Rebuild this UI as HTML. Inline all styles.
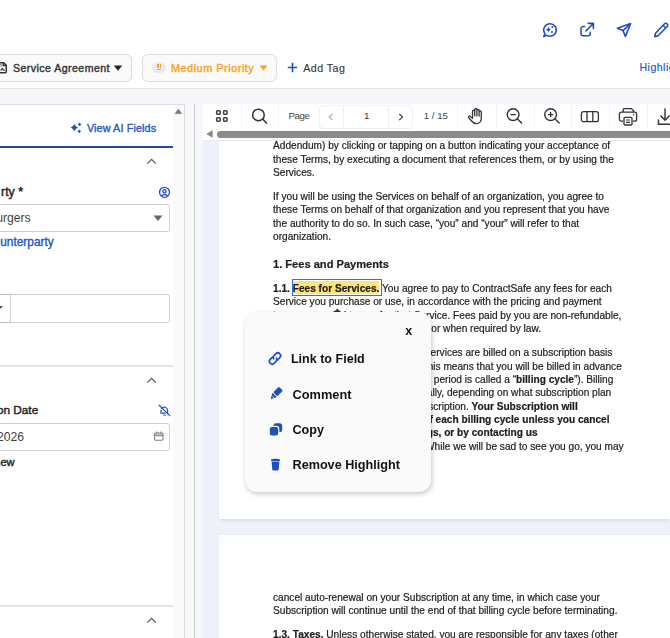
<!DOCTYPE html>
<html><head><meta charset="utf-8"><style>
html,body{margin:0;padding:0;width:670px;height:638px;overflow:hidden;background:#fff;position:relative;font-family:"Liberation Sans",sans-serif;}
.t{position:absolute;line-height:1;white-space:nowrap;}
b{font-weight:bold;}
</style></head><body>
<div style="position:absolute;left:0px;top:0px;width:670px;height:88px;background:#fff"></div>
<div style="position:absolute;left:0px;top:88px;width:670px;height:1px;background:#e6e6e6"></div>
<div style="position:absolute;left:0px;top:89px;width:670px;height:549px;background:#f6f7fb"></div>
<svg style="position:absolute;left:542px;top:22px;" width="16" height="16" viewBox="0 0 16 16"><path d="M8 1.8a6.2 6.2 0 1 1-3.3 11.4L1.8 14.6l1.1-3A6.2 6.2 0 0 1 8 1.8z" fill="none" stroke="#1d4fc0" stroke-width="1.6" stroke-linejoin="round"/><path d="M6.5 5Q7.1 7 9.1 7.6Q7.1 8.2 6.5 10.2Q5.9 8.2 3.9 7.6Q5.9 7 6.5 5z" fill="#1d4fc0"/><circle cx="10.4" cy="5" r="1" fill="#1d4fc0"/><circle cx="9.9" cy="10" r="1.05" fill="#1d4fc0"/></svg>
<svg style="position:absolute;left:579px;top:22px;" width="16" height="16" viewBox="0 0 16 16"><path d="M5.7 4.6H4a2 2 0 0 0-2 2V11.7a2 2 0 0 0 2 2h5.2a2 2 0 0 0 2-2V10.2" fill="none" stroke="#1d4fc0" stroke-width="1.5" stroke-linecap="round"/><path d="M7 8.9L14.1 1.8M9.2 1.4h5.2v5.2" fill="none" stroke="#1d4fc0" stroke-width="1.6" stroke-linecap="round" stroke-linejoin="round"/></svg>
<svg style="position:absolute;left:616px;top:22px;" width="16" height="16" viewBox="0 0 16 16"><path d="M14.6 1.6L1.4 6.2l5.6 2.4 2.4 5.8z" fill="none" stroke="#1d4fc0" stroke-width="1.6" stroke-linejoin="round"/><path d="M14.6 1.6L7 8.6" fill="none" stroke="#1d4fc0" stroke-width="1.6"/></svg>
<svg style="position:absolute;left:653px;top:22px;" width="16" height="16" viewBox="0 0 16 16"><path d="M11.6 1.8a1.6 1.6 0 0 1 2.3 0l.4.4a1.6 1.6 0 0 1 0 2.3L5 13.8l-3.3.8.8-3.3z" fill="none" stroke="#1d4fc0" stroke-width="1.6" stroke-linejoin="round"/><path d="M10.2 3.4l2.6 2.6" stroke="#1d4fc0" stroke-width="1.4"/></svg>
<div style="position:absolute;left:-20px;top:54px;width:152px;height:27.5px;box-sizing:border-box;border:1px solid #dcdcdc;border-radius:6px;background:#fafafa"></div>
<svg style="position:absolute;left:0px;top:61px;" width="9" height="13" viewBox="0 0 9 13"><path d="M-4 1.7H3.7L6.3 4.3V10.6a1.2 1.2 0 0 1-1.2 1.2H-4" fill="none" stroke="#333" stroke-width="1.5" stroke-linejoin="round"/><path d="M3.2 1.9v2.6h2.8" fill="none" stroke="#333" stroke-width="1.3"/><path d="M0.6 9.6l1.7-2.1 1.2 1.6h1.3" fill="none" stroke="#333" stroke-width="1.1"/><path d="M0.2 3.5h1.5M1 3.5v2.6" stroke="#888" stroke-width="1"/></svg>
<div class="t" style="left:13.00px;top:62.83px;font-size:10.6px;color:#333;font-weight:normal;letter-spacing:0.44px;-webkit-text-stroke:0.4px #333;">Service Agreement</div>
<svg style="position:absolute;left:113px;top:65px;" width="10" height="6" viewBox="0 0 10 6"><path d="M0.8 0.5h8.4L5 5.8z" fill="#222"/></svg>
<div style="position:absolute;left:142.3px;top:54px;width:134.7px;height:27.5px;box-sizing:border-box;border:1px solid #dcdcdc;border-radius:6px;background:#fafafa"></div>
<div style="position:absolute;left:152px;top:62px;width:14px;height:11px;background:#e8ebf1;border-radius:6px"></div>
<div style="position:absolute;left:157px;top:64.2px;width:1.5px;height:3.5px;background:#f5a623"></div>
<div style="position:absolute;left:159.5px;top:64.2px;width:1.5px;height:3.5px;background:#f5a623"></div>
<div style="position:absolute;left:157px;top:69px;width:4px;height:1.1px;background:#f5a623"></div>
<div class="t" style="left:170.90px;top:62.77px;font-size:10.9px;color:#f7a428;font-weight:normal;letter-spacing:0.52px;-webkit-text-stroke:0.4px #f7a428;">Medium Priority</div>
<svg style="position:absolute;left:258.5px;top:65px;" width="9" height="6" viewBox="0 0 9 6"><path d="M0.5 0.5h8L4.5 5.5z" fill="#f5a524"/></svg>
<svg style="position:absolute;left:287px;top:62px;" width="11" height="11" viewBox="0 0 11 11"><path d="M5.5 0.8v9.4M0.8 5.5h9.4" stroke="#1d4fc0" stroke-width="1.6"/></svg>
<div class="t" style="left:303.30px;top:62.94px;font-size:10.7px;color:#3a3a3a;font-weight:normal;letter-spacing:0.43px;-webkit-text-stroke:0.15px #3a3a3a;">Add Tag</div>
<div class="t" style="left:639.50px;top:61.83px;font-size:10.6px;color:#2456c4;font-weight:normal;letter-spacing:0.45px;-webkit-text-stroke:0.15px #2456c4;">Highlights</div>
<div style="position:absolute;left:-1px;top:104px;width:186px;height:540px;box-sizing:border-box;border:1px solid #dcdcdc;background:#fff"></div>
<div style="position:absolute;left:172.5px;top:105px;width:11.5px;height:533px;background:#fafafa"></div>
<svg style="position:absolute;left:174px;top:108px;" width="9" height="7" viewBox="0 0 9 7"><path d="M1.2 5.6L4.4 1.2l3.2 4.4z" fill="#7a7a7a" stroke="#7a7a7a" stroke-width=".7" stroke-linejoin="round"/></svg>
<svg style="position:absolute;left:70px;top:122px;" width="12" height="12" viewBox="0 0 12 12"><path d="M4.3 1.9999999999999996Q5.308 4.592 7.9 5.6Q5.308 6.608 4.3 9.2Q3.292 6.608 0.6999999999999997 5.6Q3.292 4.592 4.3 1.9999999999999996z" fill="#1d4fc0"/><path d="M9.6 0.5999999999999999Q10.23 1.77 11.4 2.4Q10.23 3.03 9.6 4.2Q8.969999999999999 3.03 7.8 2.4Q8.969999999999999 1.77 9.6 0.5999999999999999z" fill="#1d4fc0"/><path d="M9.3 7.6000000000000005Q9.930000000000001 8.77 11.100000000000001 9.4Q9.930000000000001 10.030000000000001 9.3 11.200000000000001Q8.67 10.030000000000001 7.500000000000001 9.4Q8.67 8.77 9.3 7.6000000000000005z" fill="#1d4fc0"/></svg>
<div class="t" style="left:86.90px;top:122.66px;font-size:10.8px;color:#2456c4;font-weight:normal;letter-spacing:0.12px;-webkit-text-stroke:0.35px #2456c4;">View AI Fields</div>
<div style="position:absolute;left:0px;top:146px;width:172.5px;height:2px;background:#1f4b9e"></div>
<svg style="position:absolute;left:146px;top:158px;" width="12" height="8" viewBox="0 0 12 8"><path d="M1.3 5.6L5.6 1.4l4.2 4.2" fill="none" stroke="#5a5a5a" stroke-width="1.3"/></svg>
<div class="t" style="left:1.00px;top:185.50px;font-size:12.4px;color:#222;font-weight:normal;-webkit-text-stroke:0.4px #222;">rty *</div>
<svg style="position:absolute;left:158px;top:186px;" width="13" height="13" viewBox="0 0 13 13"><circle cx="6.5" cy="6.3" r="5.0" fill="none" stroke="#1d4fc0" stroke-width="1.3"/><circle cx="6.5" cy="5.2" r="1.6" fill="none" stroke="#1d4fc0" stroke-width="1.3"/><path d="M3.3 10.2c.9-1.2 1.9-1.7 3.2-1.7s2.3.5 3.2 1.7" fill="none" stroke="#1d4fc0" stroke-width="1.3"/></svg>
<div style="position:absolute;left:-10px;top:204px;width:180px;height:28px;box-sizing:border-box;border:1px solid #cfcfcf;border-radius:3px;background:#fff"></div>
<div class="t" style="right:639.30px;top:212.47px;font-size:12.2px;color:#444;font-weight:normal;">Burgers</div>
<svg style="position:absolute;left:152.5px;top:215px;" width="10" height="7" viewBox="0 0 10 7"><path d="M0.5 0.5h9L5 6z" fill="#666"/></svg>
<div class="t" style="right:616.30px;top:237.33px;font-size:11.9px;color:#2456c4;font-weight:normal;-webkit-text-stroke:0.35px #2456c4;">Add Counterparty</div>
<div style="position:absolute;left:-10px;top:294px;width:180px;height:28.5px;box-sizing:border-box;border:1px solid #cfcfcf;border-radius:3px;background:#fff"></div>
<div style="position:absolute;left:10px;top:295px;width:1px;height:26.5px;background:#cfcfcf"></div>
<svg style="position:absolute;left:0px;top:305px;" width="4" height="6" viewBox="0 0 4 6"><path d="M-7 0.9H3.2L-1.9 5.8z" fill="#555"/></svg>
<div style="position:absolute;left:0px;top:294px;width:10.5px;height:1px;background:#bdbdbd"></div>
<div style="position:absolute;left:0px;top:321.5px;width:10.5px;height:1px;background:#bdbdbd"></div>
<div style="position:absolute;left:0px;top:365px;width:172.5px;height:1.5px;background:#e2e2e2"></div>
<svg style="position:absolute;left:146px;top:377px;" width="12" height="8" viewBox="0 0 12 8"><path d="M1.3 5.6L5.6 1.4l4.2 4.2" fill="none" stroke="#5a5a5a" stroke-width="1.3"/></svg>
<div class="t" style="right:631.80px;top:404.61px;font-size:11.8px;color:#222;font-weight:normal;-webkit-text-stroke:0.4px #222;">Expiration Date</div>
<svg style="position:absolute;left:158px;top:404px;" width="13" height="13" viewBox="0 0 13 13"><g fill="none" stroke="#1d4fc0" stroke-width="1.2" stroke-linecap="round"><path d="M3.6 4.6A3.3 3.3 0 0 1 9.6 6.2V9.6"/><path d="M3 6.2V9.1H7.2"/><path d="M5.6 11h1.6"/><path d="M1.2 1.2l10.6 10.4"/></g></svg>
<div style="position:absolute;left:-10px;top:423px;width:180px;height:28px;box-sizing:border-box;border:1px solid #cfcfcf;border-radius:3px;background:#fff"></div>
<div class="t" style="right:646.00px;top:431.07px;font-size:12.2px;color:#444;font-weight:normal;">01/01/2026</div>
<svg style="position:absolute;left:153px;top:431px;" width="11" height="11" viewBox="0 0 11 11"><rect x="1.5" y="2.3" width="8.6" height="2.4" fill="#c8c8c8"/><rect x="1.5" y="1.9" width="8.6" height="7.3" rx="1.4" fill="none" stroke="#808080" stroke-width="1.05"/><path d="M1.5 4.8h8.6M3.8 0.6v2M7.8 0.6v2" stroke="#808080" stroke-width="1.05"/></svg>
<div class="t" style="right:655.50px;top:457.49px;font-size:11.0px;color:#222;font-weight:normal;-webkit-text-stroke:0.4px #222;">Renew</div>
<div style="position:absolute;left:0px;top:605px;width:172.5px;height:1.5px;background:#e2e2e2"></div>
<svg style="position:absolute;left:146px;top:616.5px;" width="12" height="8" viewBox="0 0 12 8"><path d="M1.3 5.6L5.6 1.4l4.2 4.2" fill="none" stroke="#5a5a5a" stroke-width="1.3"/></svg>
<div style="position:absolute;left:194px;top:104px;width:1px;height:534px;background:#cdcdcd"></div>
<div style="position:absolute;left:203px;top:104px;width:467px;height:534px;background:#eef1f9"></div>
<div style="position:absolute;left:203px;top:104px;width:467px;height:36px;background:#fff"></div>
<div style="position:absolute;left:203px;top:139.5px;width:467px;height:1px;background:#e8eaf0"></div>
<div style="position:absolute;left:240.6px;top:104px;width:1px;height:24.5px;background:#f2f3f6"></div>
<div style="position:absolute;left:278.3px;top:104px;width:1px;height:24.5px;background:#f2f3f6"></div>
<div style="position:absolute;left:457.4px;top:104px;width:1px;height:24.5px;background:#f2f3f6"></div>
<div style="position:absolute;left:495.5px;top:104px;width:1px;height:24.5px;background:#f2f3f6"></div>
<div style="position:absolute;left:533.6px;top:104px;width:1px;height:24.5px;background:#f2f3f6"></div>
<div style="position:absolute;left:570.7px;top:104px;width:1px;height:24.5px;background:#f2f3f6"></div>
<div style="position:absolute;left:609px;top:104px;width:1px;height:24.5px;background:#f2f3f6"></div>
<div style="position:absolute;left:647.4px;top:104px;width:1px;height:24.5px;background:#f2f3f6"></div>
<div style="position:absolute;left:318.5px;top:104.5px;width:94.5px;height:24px;box-sizing:border-box;border:1px solid #efefef;border-radius:4px"></div>
<div style="position:absolute;left:343px;top:105px;width:1px;height:23px;background:#efefef"></div>
<div style="position:absolute;left:387.5px;top:105px;width:1px;height:23px;background:#efefef"></div>
<svg style="position:absolute;left:214px;top:109px;" width="16" height="15" viewBox="0 0 16 15"><g fill="none" stroke="#3a3d45" stroke-width="1.5"><rect x="2.65" y="1.85" width="3.5" height="3.5" rx=".9"/><rect x="9.55" y="1.85" width="3.5" height="3.5" rx=".9"/><rect x="2.65" y="8.75" width="3.5" height="3.5" rx=".9"/><rect x="9.55" y="8.75" width="3.5" height="3.5" rx=".9"/></g></svg>
<svg style="position:absolute;left:250px;top:107px;" width="18" height="18" viewBox="0 0 18 18"><circle cx="8.45" cy="7.95" r="5.8" fill="none" stroke="#333" stroke-width="1.5"/><path d="M12.6 12.1l3.9 4" stroke="#333" stroke-width="1.5" stroke-linecap="round"/></svg>
<div class="t" style="left:288.50px;top:111.09px;font-size:9.7px;color:#444;font-weight:normal;letter-spacing:-0.45px;">Page</div>
<svg style="position:absolute;left:328px;top:113px;" width="6" height="8" viewBox="0 0 6 8"><path d="M4.6 0.8L1.2 4l3.4 3.2" fill="none" stroke="#aaa" stroke-width="1.1"/></svg>
<div class="t" style="left:364.00px;top:111.10px;font-size:9.8px;color:#333;font-weight:normal;">1</div>
<svg style="position:absolute;left:397.5px;top:113px;" width="6" height="8" viewBox="0 0 6 8"><path d="M1.2 0.8L4.6 4 1.2 7.2" fill="none" stroke="#333" stroke-width="1.05"/></svg>
<div class="t" style="left:423.80px;top:111.27px;font-size:9.6px;color:#444;font-weight:normal;">1 / 15</div>
<svg style="position:absolute;left:467px;top:107px;" width="18" height="18" viewBox="0 0 18 18"><path d="M5.5 10.5V4.2a1.1 1.1 0 0 1 2.2 0V8.8M7.7 8.8V2.6a1.1 1.1 0 0 1 2.2 0V8.8M9.9 8.8V3.4a1.1 1.1 0 0 1 2.2 0V9M12.1 9V5a1.1 1.1 0 0 1 2.2 0v6.2c0 3-2 5.4-5 5.4-2.2 0-3.4-1-4.6-2.6L1.7 10.8a1.1 1.1 0 0 1 1.7-1.4l2.1 2" fill="none" stroke="#333" stroke-width="1.3" stroke-linejoin="round" stroke-linecap="round"/></svg>
<svg style="position:absolute;left:505px;top:107px;" width="18" height="18" viewBox="0 0 18 18"><circle cx="8.1" cy="7.6" r="5.9" fill="none" stroke="#333" stroke-width="1.4"/><path d="M12.3 11.8l4.3 4.2" stroke="#333" stroke-width="1.4" stroke-linecap="round"/><path d="M5.4 7.6h5.4" stroke="#333" stroke-width="1.4"/></svg>
<svg style="position:absolute;left:543px;top:107px;" width="18" height="18" viewBox="0 0 18 18"><circle cx="7.6" cy="7.6" r="5.9" fill="none" stroke="#333" stroke-width="1.4"/><path d="M11.8 11.8l4.4 4.3" stroke="#333" stroke-width="1.4" stroke-linecap="round"/><path d="M4.9 7.6h5.4M7.6 4.9v5.4" stroke="#333" stroke-width="1.4"/></svg>
<svg style="position:absolute;left:580px;top:110px;" width="20" height="13" viewBox="0 0 20 13"><rect x="1.4" y="1.6" width="17" height="10" rx="2.2" fill="none" stroke="#333" stroke-width="1.3"/><path d="M7 1.6v10M12.8 1.6v10" stroke="#333" stroke-width="1.3"/></svg>
<svg style="position:absolute;left:618px;top:107px;" width="21" height="19" viewBox="0 0 21 19"><path d="M5.2 5V2.6a1 1 0 0 1 1-1h7.2l2.2 2.2V5" fill="none" stroke="#333" stroke-width="1.3"/><path d="M5.2 14.2H3.4a2 2 0 0 1-2-2V7.2a2 2 0 0 1 2-2h13.2a2 2 0 0 1 2 2v5a2 2 0 0 1-2 2h-1.8" fill="none" stroke="#333" stroke-width="1.3"/><rect x="6" y="10.4" width="8" height="7.6" rx="1" fill="none" stroke="#333" stroke-width="1.3"/><path d="M8 13h4M8 15.4h4" stroke="#333" stroke-width="1.1"/><circle cx="15.6" cy="7.8" r=".7" fill="#333"/></svg>
<svg style="position:absolute;left:657px;top:108px;" width="16" height="18" viewBox="0 0 16 18"><path d="M8 1v11M3.8 8l4.2 4.2L12.2 8" fill="none" stroke="#333" stroke-width="1.4" stroke-linecap="round" stroke-linejoin="round"/><path d="M1.5 12v4.2h14" fill="none" stroke="#333" stroke-width="1.4" stroke-linecap="round"/></svg>
<svg style="position:absolute;left:206px;top:130px;" width="7" height="8" viewBox="0 0 7 8"><path d="M6.2 0.8v6.4L1 4z" fill="#888" stroke="#888" stroke-width=".8" stroke-linejoin="round"/></svg>
<div style="position:absolute;left:217px;top:130.8px;width:460px;height:7px;background:#8b8b8b;border-radius:3.5px"></div>
<div style="position:absolute;left:219px;top:140.5px;width:451px;height:378.7px;background:#fff;box-shadow:0 3px 4px -2px rgba(0,0,0,0.13)"></div>
<div style="position:absolute;left:219px;top:534.5px;width:451px;height:110px;background:#fff"></div>
<div class="t" style="left:273.30px;top:141.00px;font-size:10.14px;color:#1c1c1c;font-weight:normal;will-change:transform;-webkit-text-stroke:0.2px #1c1c1c;">Addendum) by clicking or tapping on a button indicating your acceptance of</div>
<div class="t" style="left:273.30px;top:154.62px;font-size:10.14px;color:#1c1c1c;font-weight:normal;will-change:transform;-webkit-text-stroke:0.2px #1c1c1c;">these Terms, by executing a document that references them, or by using the</div>
<div class="t" style="left:273.30px;top:168.00px;font-size:10.14px;color:#1c1c1c;font-weight:normal;will-change:transform;-webkit-text-stroke:0.2px #1c1c1c;">Services.</div>
<div class="t" style="left:273.30px;top:192.00px;font-size:10.14px;color:#1c1c1c;font-weight:normal;will-change:transform;-webkit-text-stroke:0.2px #1c1c1c;">If you will be using the Services on behalf of an organization, you agree to</div>
<div class="t" style="left:273.30px;top:205.00px;font-size:10.14px;color:#1c1c1c;font-weight:normal;will-change:transform;-webkit-text-stroke:0.2px #1c1c1c;">these Terms on behalf of that organization and you represent that you have</div>
<div class="t" style="left:273.30px;top:219.00px;font-size:10.14px;color:#1c1c1c;font-weight:normal;will-change:transform;-webkit-text-stroke:0.2px #1c1c1c;">the authority to do so. In such case, “you” and “your” will refer to that</div>
<div class="t" style="left:273.30px;top:232.00px;font-size:10.14px;color:#1c1c1c;font-weight:normal;will-change:transform;-webkit-text-stroke:0.2px #1c1c1c;">organization.</div>
<div class="t" style="left:273.30px;top:258.90px;font-size:11.1px;color:#222;font-weight:bold;will-change:transform;-webkit-text-stroke:0.2px #1c1c1c;">1. Fees and Payments</div>
<div style="position:absolute;left:291.5px;top:279.2px;width:90.7px;height:16.8px;box-sizing:border-box;border:1.7px solid #2f6fe8;background:#fff"></div>
<div style="position:absolute;left:293.3px;top:281px;width:86px;height:13px;background:#fde47c"></div>
<div class="t" style="left:273.30px;top:284.00px;font-size:10.14px;color:#1c1c1c;font-weight:normal;will-change:transform;-webkit-text-stroke:0.2px #1c1c1c;"><b>1.1. </b><b>Fees for Services.</b> You agree to pay to ContractSafe any fees for each</div>
<div class="t" style="left:273.30px;top:297.00px;font-size:10.14px;color:#1c1c1c;font-weight:normal;will-change:transform;-webkit-text-stroke:0.2px #1c1c1c;">Service you purchase or use, in accordance with the pricing and payment</div>
<div style="position:absolute;left:246px;top:300px;width:424px;height:170px;overflow:hidden">
<div class="t" style="right:48.90px;top:11.00px;font-size:10.14px;color:#1c1c1c;font-weight:normal;will-change:transform;-webkit-text-stroke:0.2px #1c1c1c;">terms presented to you for that Service. Fees paid by you are non-refundable,</div>
<div class="t" style="right:128.50px;top:24.00px;font-size:10.14px;color:#1c1c1c;font-weight:normal;will-change:transform;-webkit-text-stroke:0.2px #1c1c1c;">except as provided in these Terms or when required by law.</div>
<div class="t" style="right:57.60px;top:48.00px;font-size:10.14px;color:#1c1c1c;font-weight:normal;will-change:transform;-webkit-text-stroke:0.2px #1c1c1c;"><b>1.2. Subscriptions.</b> Some of our Services are billed on a subscription basis</div>
<div class="t" style="right:48.20px;top:62.00px;font-size:10.14px;color:#1c1c1c;font-weight:normal;will-change:transform;-webkit-text-stroke:0.2px #1c1c1c;">(“Subscription(s)”). This means that you will be billed in advance</div>
<div class="t" style="right:56.70px;top:75.00px;font-size:10.14px;color:#1c1c1c;font-weight:normal;will-change:transform;-webkit-text-stroke:0.2px #1c1c1c;">on a recurring and periodic basis (each period is called a “<b>billing cycle</b>”). Billing</div>
<div class="t" style="right:59.00px;top:88.00px;font-size:10.14px;color:#1c1c1c;font-weight:normal;will-change:transform;-webkit-text-stroke:0.2px #1c1c1c;">cycles are typically monthly or annually, depending on what subscription plan</div>
<div class="t" style="right:92.40px;top:102.00px;font-size:10.14px;color:#1c1c1c;font-weight:normal;will-change:transform;-webkit-text-stroke:0.2px #1c1c1c;">you select when purchasing a Subscription. <b>Your Subscription will</b></div>
<div class="t" style="right:60.50px;top:115.00px;font-size:10.14px;color:#1c1c1c;font-weight:normal;will-change:transform;-webkit-text-stroke:0.2px #1c1c1c;"><b>automatically renew at the end of each billing cycle unless you cancel</b></div>
<div class="t" style="right:132.40px;top:128.00px;font-size:10.14px;color:#1c1c1c;font-weight:normal;will-change:transform;-webkit-text-stroke:0.2px #1c1c1c;"><b>auto-renewal through your account settings, or by contacting us</b></div>
<div class="t" style="right:46.40px;top:142.00px;font-size:10.14px;color:#1c1c1c;font-weight:normal;will-change:transform;-webkit-text-stroke:0.2px #1c1c1c;">at support@contractsafe.com. While we will be sad to see you go, you may</div>
</div>
<div class="t" style="left:273.30px;top:593.00px;font-size:10.14px;color:#1c1c1c;font-weight:normal;will-change:transform;-webkit-text-stroke:0.2px #1c1c1c;">cancel auto-renewal on your Subscription at any time, in which case your</div>
<div class="t" style="left:273.30px;top:606.00px;font-size:10.14px;color:#1c1c1c;font-weight:normal;will-change:transform;-webkit-text-stroke:0.2px #1c1c1c;">Subscription will continue until the end of that billing cycle before terminating.</div>
<div class="t" style="left:273.30px;top:630.00px;font-size:10.14px;color:#1c1c1c;font-weight:normal;will-change:transform;-webkit-text-stroke:0.2px #1c1c1c;"><b>1.3. Taxes.</b> Unless otherwise stated, you are responsible for any taxes (other</div>
<svg style="position:absolute;left:332px;top:308px;" width="10" height="5" viewBox="0 0 10 5"><path d="M1.2 4.2L5.3 0.7l4.1 3.5z" fill="#2d3548"/></svg>
<div style="position:absolute;left:244.5px;top:311.5px;width:186.6px;height:180.8px;background:#fafafa;border-radius:12px;box-shadow:1px 2px 5px rgba(0,0,0,0.22)"></div>
<div class="t" style="left:405.30px;top:324.72px;font-size:12.5px;color:#111;font-weight:bold;">x</div>
<svg style="position:absolute;left:267px;top:351px;" width="16" height="15" viewBox="0 0 16 15"><g transform="rotate(-45 8 7.5)" fill="none" stroke="#1d4fc0" stroke-width="1.7" stroke-linecap="round"><path d="M7.2 4.7H4.1a2.8 2.8 0 0 0 0 5.6H6.6a2.8 2.8 0 0 0 2.6-2.1"/><path d="M8.8 10.3h3.1a2.8 2.8 0 0 0 0-5.6H9.4a2.8 2.8 0 0 0-2.6 2.1"/></g></svg>
<div class="t" style="left:290.90px;top:353.38px;font-size:12.55px;color:#111;font-weight:bold;">Link to Field</div>
<svg style="position:absolute;left:268px;top:387px;" width="15" height="14" viewBox="0 0 15 14"><g transform="rotate(45 7.5 7)"><rect x="4.6" y="-0.6" width="5.8" height="8" rx="1.2" fill="#1d4fc0"/><path d="M4.6 8.2h5.8l-.9 2.4H5.5z" fill="#1d4fc0"/><path d="M6.3 11h2.4v2.6l-2.4-.9z" fill="#1d4fc0"/></g></svg>
<div class="t" style="left:292.50px;top:388.56px;font-size:12.8px;color:#111;font-weight:bold;">Comment</div>
<svg style="position:absolute;left:268px;top:422px;" width="16" height="15" viewBox="0 0 16 15"><rect x="5.4" y="1.2" width="8.8" height="8.8" rx="2.6" fill="#1d4fc0"/><rect x="1.2" y="4.4" width="9.6" height="9.6" rx="2.8" fill="#1d4fc0" stroke="#fafafa" stroke-width="1.2"/></svg>
<div class="t" style="left:292.50px;top:424.13px;font-size:12.6px;color:#111;font-weight:bold;">Copy</div>
<svg style="position:absolute;left:270px;top:458px;" width="11" height="13" viewBox="0 0 11 13"><path d="M1.6 3.4h7.8l-.7 8.2a1 1 0 0 1-1 .9H3.3a1 1 0 0 1-1-.9z" fill="#1d4fc0"/><path d="M1 1.6c1.2-.5 2.6-.8 4.5-.8s3.3.3 4.5.8v1.4H1z" fill="#1d4fc0"/></svg>
<div class="t" style="left:292.50px;top:459.49px;font-size:12.65px;color:#111;font-weight:bold;">Remove Highlight</div>
</body></html>
